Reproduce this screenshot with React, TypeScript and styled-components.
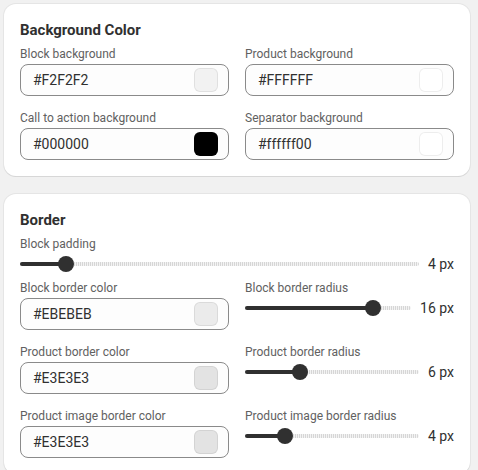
import React from "react";
import styled, { createGlobalStyle } from "styled-components";

const GlobalStyle = createGlobalStyle`
  html, body {
    margin: 0;
    padding: 0;
    background: #f1f1f1;
    overflow: hidden;
    font-family: "Roboto", "Inter", "Noto Sans", sans-serif;
    -webkit-font-smoothing: antialiased;
  }
  * { box-sizing: border-box; }
`;

const Page = styled.div`
  display: flex;
  flex-direction: column;
  gap: 18px;
  padding: 4px 8px 0 4px;
`;

const Card = styled.section`
  background: #ffffff;
  border-radius: 12px;
  padding: 16px;
  box-shadow: 0 0 0 1px rgba(26, 26, 26, 0.05), 0 1px 0 rgba(26, 26, 26, 0.07);
  display: flex;
  flex-direction: column;
`;

const Heading = styled.h2`
  margin: 0 0 4px;
  font-size: 15px;
  line-height: 20px;
  font-weight: 700;
  color: #303030;
`;

const Grid = styled.div<{ $top?: number }>`
  display: grid;
  grid-template-columns: 1fr 1fr;
  column-gap: 16px;
  row-gap: 12px;
  align-items: start;
  margin-top: ${(p) => p.$top ?? 0}px;
`;

const Field = styled.div`
  display: flex;
  flex-direction: column;
  min-width: 0;
`;

const Label = styled.label`
  font-size: 12px;
  line-height: 20px;
  color: #616161;
`;

const InputBox = styled.div`
  height: 32px;
  border: 1px solid #8a8a8a;
  border-radius: 8px;
  background: #fdfdfd;
  display: flex;
  align-items: center;
  padding: 0 10px 0 12px;
`;

const InputText = styled.span`
  flex: 1;
  font-size: 14px;
  color: #303030;
`;

const Swatch = styled.span<{ $color: string }>`
  width: 24px;
  height: 24px;
  border-radius: 6px;
  background: ${(p) => p.$color};
  box-shadow: inset 0 0 0 1px rgba(0, 0, 0, 0.07);
`;

const SliderRow = styled.div`
  height: 20px;
  display: flex;
  align-items: center;
  gap: 9px;
`;

const Track = styled.div`
  flex: 1;
  height: 20px;
  position: relative;
  display: flex;
  align-items: center;
`;

const Rail = styled.div`
  width: 100%;
  height: 4px;
  border-radius: 2px;
  background: repeating-linear-gradient(
    90deg,
    #d6d6d6 0 1px,
    #f3f3f3 1px 2px
  );
`;

const Fill = styled.div`
  position: absolute;
  left: 0;
  top: 8px;
  height: 4px;
  border-radius: 2px;
  background: #303030;
`;

const Knob = styled.div`
  position: absolute;
  top: 2px;
  width: 16px;
  height: 16px;
  border-radius: 50%;
  background: #303030;
`;

const Value = styled.span`
  font-size: 14px;
  line-height: 20px;
  color: #303030;
  white-space: nowrap;
`;

function ColorField({ label, value, swatch }: { label: string; value: string; swatch: string }) {
  return (
    <Field>
      <Label>{label}</Label>
      <InputBox>
        <InputText>{value}</InputText>
        <Swatch $color={swatch} />
      </InputBox>
    </Field>
  );
}

function SliderField({ label, value, max }: { label: string; value: number; max: number }) {
  const f = value / max;
  return (
    <Field>
      <Label>{label}</Label>
      <SliderRow>
        <Track>
          <Rail />
          <Fill style={{ width: `calc(${f} * (100% - 16px) + 8px)` }} />
          <Knob style={{ left: `calc(${f} * (100% - 16px))` }} />
        </Track>
        <Value>{value} px</Value>
      </SliderRow>
    </Field>
  );
}

export default function App() {
  return (
    <>
      <GlobalStyle />
      <Page>
        <Card>
          <Heading>Background Color</Heading>
          <Grid>
            <ColorField label="Block background" value="#F2F2F2" swatch="#F2F2F2" />
            <ColorField label="Product background" value="#FFFFFF" swatch="#FFFFFF" />
            <ColorField label="Call to action background" value="#000000" swatch="#000000" />
            <ColorField label="Separator background" value="#ffffff00" swatch="#ffffff" />
          </Grid>
        </Card>
        <Card>
          <Heading>Border</Heading>
          <SliderField label="Block padding" value={4} max={40} />
          <Grid $top={4}>
            <ColorField label="Block border color" value="#EBEBEB" swatch="#EBEBEB" />
            <SliderField label="Block border radius" value={16} max={20} />
            <ColorField label="Product border color" value="#E3E3E3" swatch="#E3E3E3" />
            <SliderField label="Product border radius" value={6} max={20} />
            <ColorField label="Product image border color" value="#E3E3E3" swatch="#E3E3E3" />
            <SliderField label="Product image border radius" value={4} max={20} />
          </Grid>
        </Card>
      </Page>
    </>
  );
}
